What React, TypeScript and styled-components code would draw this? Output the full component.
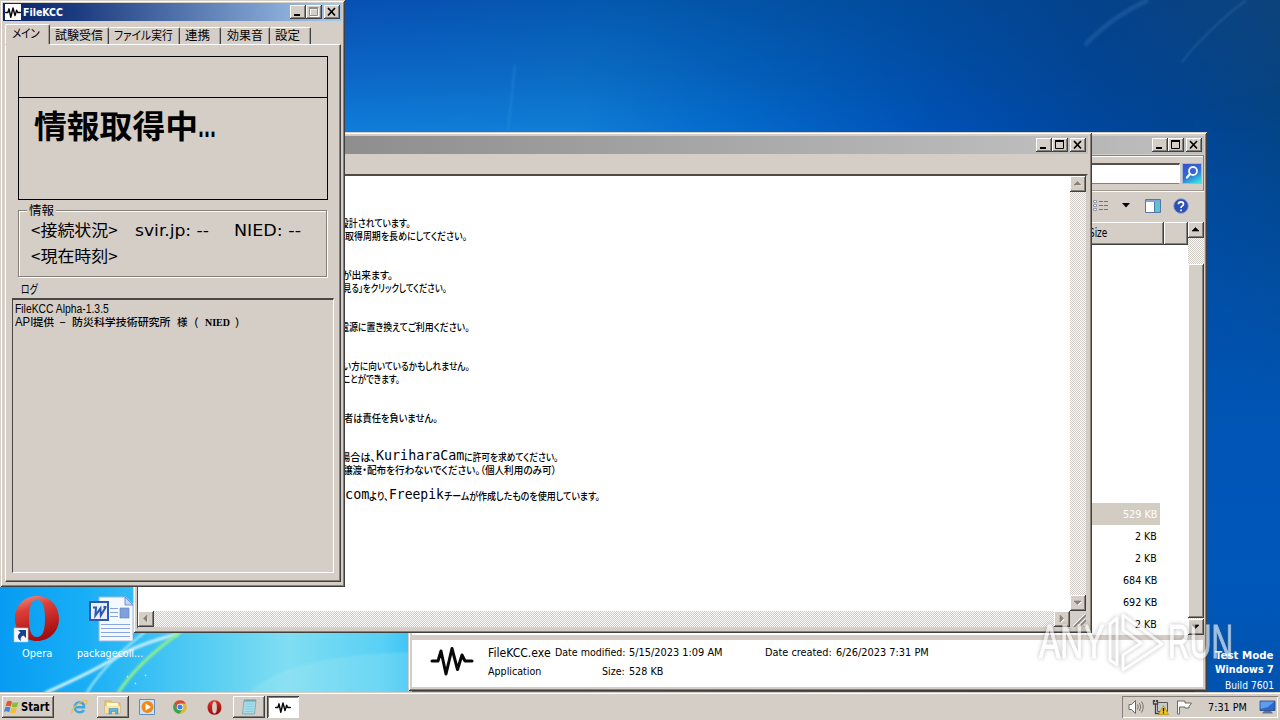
import React, { useLayoutEffect, useRef, useState } from "react";
import styled, { createGlobalStyle, css } from "styled-components";

const FACE = "#d5cec7";
const UI = `"DejaVu Sans Condensed", "DejaVu Sans", "Noto Sans CJK JP", sans-serif`;
const JP = `"Noto Sans CJK JP", sans-serif`;
const MONO = `"DejaVu Sans Mono", monospace`;
const ARIAL = `"Liberation Sans", sans-serif`;
const NARROW = `"Liberation Sans Narrow", "Liberation Sans", sans-serif`;

const Global = createGlobalStyle`
  *, *::before, *::after { box-sizing: border-box; }
  body { margin: 0; overflow: hidden; background: #0552a5; }
  svg { display: block; flex: none; }
`;

const raised = css`
  box-shadow: inset -1px -1px #404040, inset 1px 1px #fff, inset -2px -2px #858079;
`;
const dither = css`
  background: conic-gradient(#fbfaf8 25%, #d2ccc6 0 50%, #fbfaf8 0 75%, #d2ccc6 0) 0 0 / 2px 2px;
`;

/* ---------- text set to a given advance width ---------- */

interface TextStyle {
  $size?: number;
  $face?: string;
  $bold?: boolean;
  $weight?: number;
  $color?: string;
}
const FitBox = styled.span<{ $w: number }>`
  display: block;
  flex: none;
  width: ${(p) => p.$w}px;
  white-space: pre;
`;
const FitInner = styled.span<TextStyle>`
  display: inline-block;
  transform-origin: 0 50%;
  font-family: ${(p) => p.$face ?? UI};
  font-size: ${(p) => p.$size ?? 11}px;
  font-weight: ${(p) => (p.$bold ? 700 : p.$weight ?? 400)};
  color: ${(p) => p.$color ?? "#000"};
  font-feature-settings: "palt";
  line-height: 1;
  vertical-align: middle;
`;
function Fit({ w, dy, children, ...style }: { w: number; dy?: number; children: string } & TextStyle) {
  const ref = useRef<HTMLSpanElement>(null);
  const [scale, setScale] = useState(1);
  useLayoutEffect(() => {
    if (ref.current && ref.current.offsetWidth) setScale(w / ref.current.offsetWidth);
  }, [w, children]);
  const lift = dy ?? (style.$face === JP ? -2 : -1);
  return (
    <FitBox $w={w}>
      <FitInner ref={ref} style={{ transform: `translateY(${lift}px) scaleX(${scale})` }} {...style}>
        {children}
      </FitInner>
    </FitBox>
  );
}

/* ---------- desktop ---------- */

const Desktop = styled.main`
  position: relative;
  width: 1280px;
  height: 720px;
  overflow: hidden;
  cursor: default;
`;
const Layer = styled.div<{ $x: number; $y: number }>`
  position: absolute;
  left: ${(p) => p.$x}px;
  top: ${(p) => p.$y}px;
`;
const Shortcut = styled.div<{ $x: number; $w: number }>`
  position: absolute;
  left: ${(p) => p.$x}px;
  top: 595px;
  width: ${(p) => p.$w}px;
  display: flex;
  flex-direction: column;
  align-items: center;
  gap: 1px;
`;
const BuildTag = styled.div`
  position: absolute;
  right: 6px;
  top: 648px;
  display: flex;
  flex-direction: column;
  align-items: flex-end;
  line-height: 14px;
`;
const BuildLine = styled.div`
  height: 16px;
  padding-top: 2px;
`;
const TagLine = styled.div`
  height: 14px;
`;

function Wallpaper() {
  return (
    <svg width="1280" height="720">
      <defs>
        <linearGradient id="top" x1="0" x2="1" y1="0" y2="0">
          <stop offset=".27" stopColor="#0850b4" />
          <stop offset=".48" stopColor="#0559ae" />
          <stop offset=".7" stopColor="#024c9d" />
          <stop offset=".86" stopColor="#05428a" />
          <stop offset="1" stopColor="#0e447c" />
        </linearGradient>
        <linearGradient id="mid" x1="0" x2="1" y1="0" y2="0">
          <stop offset=".27" stopColor="#107fdb" />
          <stop offset=".45" stopColor="#1180d8" />
          <stop offset=".57" stopColor="#046cce" />
          <stop offset=".74" stopColor="#0050b6" />
          <stop offset=".86" stopColor="#00479c" />
          <stop offset=".93" stopColor="#004594" />
          <stop offset="1" stopColor="#034384" />
        </linearGradient>
        <linearGradient id="fade" x1="0" x2="0" y1="0" y2="1">
          <stop offset="0" stopColor="#000" />
          <stop offset=".1" stopColor="#777" />
          <stop offset=".19" stopColor="#fff" />
        </linearGradient>
        <mask id="fadeMask">
          <rect width="1280" height="720" fill="url(#fade)" />
        </mask>
        <linearGradient id="right" x1="0" x2="0" y1="0" y2="1">
          <stop offset=".15" stopColor="#0058bc" stopOpacity="0" />
          <stop offset=".6" stopColor="#0055b6" />
          <stop offset=".8" stopColor="#0058bb" />
          <stop offset="1" stopColor="#0052ac" />
        </linearGradient>
        <linearGradient id="low" x1="0" x2="1" y1="0" y2="0">
          <stop offset="0" stopColor="#079cf2" />
          <stop offset=".2" stopColor="#18aef6" />
          <stop offset=".45" stopColor="#4cc9f3" />
          <stop offset=".7" stopColor="#80def2" />
          <stop offset=".93" stopColor="#58d0f5" />
          <stop offset="1" stopColor="#3cc3f6" />
        </linearGradient>
        <linearGradient id="ray" x1="0" x2="1" y1="1" y2="0">
          <stop offset="0" stopColor="#d8f8ff" />
          <stop offset="1" stopColor="#fff" stopOpacity=".7" />
        </linearGradient>
        <filter id="soft" x="-20%" y="-20%" width="140%" height="140%">
          <feGaussianBlur stdDeviation="1.1" />
        </filter>
      </defs>
      <rect width="1280" height="720" fill="url(#top)" />
      <rect width="1280" height="720" fill="url(#mid)" mask="url(#fadeMask)" />
      <rect x="1195" width="85" height="720" fill="url(#right)" />
      <path d="M1182 62Q1205 32 1246 0" stroke="#5c92c8" strokeOpacity=".35" strokeWidth="1.500" fill="none" filter="url(#soft)" />
      <path d="M1085 45Q1110 18 1148 0" stroke="#3f7cbc" strokeOpacity=".3" strokeWidth="5" fill="none" filter="url(#soft)" />
      <path d="M515 65Q512 95 508 130" stroke="#3b9be8" strokeOpacity=".3" strokeWidth="2" fill="none" filter="url(#soft)" />
      <rect y="560" width="412" height="160" fill="url(#low)" />
      <path d="M246 695Q285 655 412 652V700Z" fill="#b8f0f4" opacity=".2" filter="url(#soft)" />
      <path d="M45 693Q92 672 115 658T178 634" stroke="url(#ray)" strokeWidth="3" fill="none" filter="url(#soft)" />
      <path d="M86 694Q104 664 145 632" stroke="#a5ecff" strokeWidth="2" fill="none" filter="url(#soft)" />
      <path d="M118 693Q138 662 182 631" stroke="#8ff08a" strokeWidth="3" fill="none" filter="url(#soft)" />
      <path d="M135 683l1 1M127 676l1 1M145 675l1 1" stroke="#b9f4ff" strokeWidth="1.500" />
    </svg>
  );
}

const OperaMark = ({ w, h }: { w: number; h: number }) => (
  <svg width={w} height={h} viewBox="0 0 44 46">
    <defs>
      <linearGradient id="op" x1="0" x2=".3" y1="0" y2="1">
        <stop offset="0" stopColor="#e0473d" />
        <stop offset=".35" stopColor="#cc241f" />
        <stop offset="1" stopColor="#9c0d10" />
      </linearGradient>
    </defs>
    <path
      fillRule="evenodd"
      fill="url(#op)"
      stroke="#b5332e"
      strokeWidth=".6"
      d="M22 1C34 1 43 10 43 23S34 45 22 45 1 36 1 23 10 1 22 1ZM22 4.500C16.500 4.500 14.500 12 14.500 23S16.500 41.500 22 41.500 29.500 34 29.500 23 27.500 4.500 22 4.500Z"
    />
  </svg>
);
const OperaIcon = () => (
  <svg width="50" height="48" viewBox="0 0 50 48">
    <defs>
      <linearGradient id="opb" x1="0" x2=".3" y1="0" y2="1">
        <stop offset="0" stopColor="#f0968c" />
        <stop offset=".35" stopColor="#dc3f36" />
        <stop offset="1" stopColor="#a50d10" />
      </linearGradient>
    </defs>
    <path
      fillRule="evenodd"
      fill="url(#opb)"
      d="M25 1C37 1 47 10 47 23.500S37 46 25 46 3 37 3 23.500 13 1 25 1ZM25 5C19 5 17 12 17 23.500S19 42 25 42 33 35 33 23.500 31 5 25 5Z"
    />
    <path d="M2 33h14v14H2z" fill="#f4f7fb" stroke="#b9c3d0" strokeWidth=".6" />
    <path d="M6 35h8v8l-2.500-2.500C9 41.500 8 43 9 46 5 43.500 5 40 8.500 37.500Z" fill="#19418e" />
  </svg>
);
const WordIcon = () => (
  <svg width="46" height="48" viewBox="-2 -1 46 48">
    <path d="M10 1h27l7 7v37H10z" fill="#f4f8ff" stroke="#a4b6dd" />
    <path d="M36 1v8h8z" fill="#c2d6f5" stroke="#5a7fc4" strokeWidth=".8" />
    <path d="M21 12.500h8M21 16.500h8M21 20.500h8M12 28.500h29M12 32.500h29M12 36.500h29M12 40.500h29" stroke="#8aa4dd" />
    <path d="M31 12h9v10h-9z" fill="#7f9fdd" stroke="#5b7cc5" strokeWidth=".6" />
    <path d="M1 6h18v18H1z" fill="#e8effc" stroke="#2b57b0" strokeWidth="2" />
    <path d="M4 11.500h4M7 11.500l-.6 8 5-7 .4 7 5-8.500M14.500 11h3" fill="none" stroke="#2b57b0" strokeWidth="2" />
  </svg>
);

/* ---------- window chrome ---------- */

const Win = styled.section<{ $x: number; $y: number; $w: number; $h: number }>`
  position: absolute;
  left: ${(p) => p.$x}px;
  top: ${(p) => p.$y}px;
  width: ${(p) => p.$w}px;
  height: ${(p) => p.$h}px;
  padding: 4px;
  display: flex;
  flex-direction: column;
  background: ${FACE};
  box-shadow: inset 1px 1px ${FACE}, inset -1px -1px #404040, inset 2px 2px #fff, inset -2px -2px #858079;
`;
const AppWin = styled(Win)`
  padding: 3px;
`;
const ExplorerWin = styled(Win)`
  padding-right: 3px;
`;
const TitleBar = styled.header<{ $bg: string }>`
  height: 18px;
  flex: none;
  padding: 0 2px;
  display: flex;
  align-items: center;
  background: ${(p) => p.$bg};
`;
const TitleGap = styled.div`
  flex: 1;
`;
const CaptionBtn = styled.span<{ $gap?: boolean }>`
  width: 16px;
  height: 14px;
  margin-left: ${(p) => (p.$gap ? 2 : 0)}px;
  background: ${FACE};
  ${raised}
`;
function CaptionButtons({ maxDisabled }: { maxDisabled?: boolean }) {
  return (
    <>
      <CaptionBtn>
        <svg width="16" height="14"><path d="M4 9h6v2H4z" /></svg>
      </CaptionBtn>
      <CaptionBtn>
        <svg width="16" height="14" fill="none">
          {maxDisabled && <path d="M4.500 4v7.500h8V4M4 4h9" stroke="#fff" />}
          <path d="M3.500 3v7.500h8V3M3 3h9" stroke={maxDisabled ? "#928c84" : "#000"} strokeWidth={1} />
          <path d="M3 3h9" stroke={maxDisabled ? "#928c84" : "#000"} strokeWidth="2" />
        </svg>
      </CaptionBtn>
      <CaptionBtn $gap>
        <svg width="16" height="14"><path d="M4 3l7 7.500M11 3L4 10.500" stroke="#000" strokeWidth="1.700" /></svg>
      </CaptionBtn>
    </>
  );
}
const Wave = ({ w, h, sw = 2.4 }: { w: number; h: number; sw?: number }) => (
  <svg width={w} height={h} viewBox="0 0 44 30" fill="none">
    <path d="M2 15h6l3-10 5 23 6-25.500 5.500 21L32 9l3 6h7" stroke="#080808" strokeWidth={sw} strokeLinejoin="round" strokeLinecap="round" />
  </svg>
);

/* ---------- scroll bars ---------- */

const Track = styled.div<{ $row?: boolean }>`
  display: flex;
  flex-direction: ${(p) => (p.$row ? "row" : "column")};
  justify-content: space-between;
  flex: none;
  ${(p) => (p.$row ? "height: 16px; flex: 1;" : "width: 16px;")}
  ${dither}
`;
const ArrowBtn = styled.span`
  width: 16px;
  height: 16px;
  flex: none;
  background: ${FACE};
  ${raised}
`;
const arrows = {
  up: "M4 9h7L7.500 5.500z",
  down: "M4 6h7L7.500 9.500z",
  left: "M9 4v7L5.500 7.500z",
  right: "M6 4v7L9.500 7.500z",
};
const Arrow = ({ dir, off }: { dir: keyof typeof arrows; off?: boolean }) => (
  <ArrowBtn>
    <svg width="16" height="16">
      {off && <path d={arrows[dir]} fill="#fff" transform="translate(1 1)" />}
      <path d={arrows[dir]} fill={off ? "#858079" : "#000"} stroke={off ? "#858079" : "#000"} strokeWidth=".6" />
    </svg>
  </ArrowBtn>
);

/* ---------- Explorer ---------- */

const AddressBar = styled.div`
  height: 36px;
  flex: none;
  margin-top: 1px;
  padding: 0 1px 0 2px;
  display: flex;
  align-items: center;
  justify-content: flex-end;
  gap: 2px;
  border: 1px solid #858079;
  border-bottom-color: #a09a92;
  box-shadow: inset 1px 1px #fff, 0 1px #fff;
`;
const SearchField = styled.div`
  width: 300px;
  height: 21px;
  background: #fff;
  border: 1px solid #858079;
  border-top: 2px solid #55504a;
  border-right-color: #fff;
`;
const Tools = styled.div`
  height: 31px;
  flex: none;
  padding: 0 15px 2px 0;
  display: flex;
  align-items: center;
  justify-content: flex-end;
`;
const ToolSlot = styled.span<{ $mr: number }>`
  margin-right: ${(p) => p.$mr}px;
`;
const Listing = styled.div`
  height: 413px;
  flex: none;
  display: flex;
  background: #fff;
`;
const Files = styled.div`
  flex: 1;
  display: flex;
  flex-direction: column;
`;
const HeaderRow = styled.div`
  height: 23px;
  display: flex;
  justify-content: flex-end;
`;
const HeaderCell = styled.div<{ $w: number }>`
  width: ${(p) => p.$w}px;
  padding-left: 8px;
  display: flex;
  align-items: center;
  background: ${FACE};
  ${raised}
`;
const FileRows = styled.div`
  margin-top: 258px;
  padding-right: 28px;
  display: flex;
  flex-direction: column;
  align-items: flex-end;
`;
const FileRow = styled.div<{ $on?: boolean }>`
  width: 400px;
  height: 22px;
  padding-right: 3px;
  display: flex;
  align-items: center;
  justify-content: flex-end;
  background: ${(p) => (p.$on ? "#d2ccc3" : "transparent")};
`;
const Thumb = styled.div`
  flex: 1;
  margin: 26px 0 1px;
  background: ${FACE};
  ${raised}
`;
const Details = styled.div`
  flex: 1;
  margin-top: 5px;
  margin-right: 1px;
  display: flex;
  align-items: flex-start;
  padding: 6px 0 0 18px;
  background: #fff;
`;
const DetailGrid = styled.div`
  display: grid;
  grid-template-columns: 67px 74px 136px 71px 100px;
  grid-template-rows: 13px 13px;
  row-gap: 6px;
  margin: 0 0 0 14px;
  align-items: center;
`;
const RightCell = styled.div`
  display: flex;
  justify-content: flex-end;
  padding-right: 4px;
`;

const files: [string, number][] = [
  ["529 KB", 34],
  ["2 KB", 22],
  ["2 KB", 22],
  ["684 KB", 34],
  ["692 KB", 34],
  ["2 KB", 22],
];

function Explorer() {
  return (
    <ExplorerWin $x={408} $y={132} $w={799} $h={559}>
      <TitleBar $bg="linear-gradient(90deg,#808080,#c0c0c0)">
        <TitleGap />
        <CaptionButtons />
      </TitleBar>
      <AddressBar>
        <SearchField />
        <svg width="20" height="21" viewBox="0 0 20 21">
          <defs>
            <linearGradient id="srch" x1=".2" x2=".7" y1="0" y2="1">
              <stop offset="0" stopColor="#3a52cc" />
              <stop offset=".55" stopColor="#2f6fd4" />
              <stop offset="1" stopColor="#35dfe0" />
            </linearGradient>
          </defs>
          <rect x=".5" y=".5" width="19" height="20" fill="url(#srch)" stroke="#9fb6dd" />
          <circle cx="11" cy="8" r="4" fill="#3d62cc" stroke="#eef6ff" strokeWidth="1.800" />
          <path d="M8 11L5 14.500" stroke="#eef6ff" strokeWidth="2.400" strokeLinecap="round" />
        </svg>
      </AddressBar>
      <Tools>
        <ToolSlot $mr={13}>
          <svg width="16" height="14" fill="none">
            <path d="M.5 1.500h3v2h-3zM.5 5.500h3v2h-3zM.5 9.500h3v2h-3z" stroke="#8f97ab" fill="#fff" />
            <path d="M6 2.500h4M11 2.500h4M6 6.500h4M11 6.500h4M6 10.500h4M11 10.500h4" stroke="#6d7488" />
          </svg>
        </ToolSlot>
        <ToolSlot $mr={15}>
          <svg width="8" height="5"><path d="M0 0h8L4 4.500z" /></svg>
        </ToolSlot>
        <ToolSlot $mr={12}>
          <svg width="16" height="14">
            <path d="M.5.5h15v13H.5z" fill="#fff" stroke="#5577a8" />
            <path d="M10 1h5v12h-5z" fill="#5ec3cf" />
            <path d="M1 2h14" stroke="#7fa5d2" strokeWidth="2" />
            <path d="M9.500 3v10" stroke="#5577a8" />
          </svg>
        </ToolSlot>
        <svg width="16" height="16">
          <circle cx="8" cy="8" r="7.400" fill="#2c50b5" stroke="#a0adc8" />
          <path d="M5.500 6.200C5.500 3 10.500 3 10.500 6.200 10.500 8 8 7.800 8 10M8 11.500v1.700" stroke="#fff" strokeWidth="1.700" fill="none" />
        </svg>
      </Tools>
      <Listing>
        <Files>
          <HeaderRow>
            <HeaderCell $w={83}><Fit w={18} $size={11.5}>Size</Fit></HeaderCell>
            <HeaderCell $w={24} />
          </HeaderRow>
          <FileRows>
            {files.map(([label, w], i) => (
              <FileRow key={i} $on={i === 0}>
                <Fit w={w} $size={11} $color={i === 0 ? "#fff" : "#000"}>{label}</Fit>
              </FileRow>
            ))}
          </FileRows>
        </Files>
        <Track>
          <Arrow dir="up" />
          <Thumb />
          <Arrow dir="down" />
        </Track>
      </Listing>
      <Details>
        <Wave w={44} h={30} sw={3} />
        <DetailGrid>
          <Fit w={63} $size={12.5}>FileKCC.exe</Fit>
          <RightCell><Fit w={70} $size={11}>Date modified:</Fit></RightCell>
          <Fit w={94} $size={11}>5/15/2023 1:09 AM</Fit>
          <RightCell><Fit w={67} $size={11}>Date created:</Fit></RightCell>
          <Fit w={93} $size={11}>6/26/2023 7:31 PM</Fit>
          <Fit w={53} $size={11}>Application</Fit>
          <RightCell><Fit w={23} $size={11}>Size:</Fit></RightCell>
          <Fit w={34} $size={11}>528 KB</Fit>
        </DetailGrid>
      </Details>
    </ExplorerWin>
  );
}

/* ---------- Notepad ---------- */

const MenuBar = styled.div`
  height: 20px;
  flex: none;
`;
const Editor = styled.div`
  flex: 1;
  display: flex;
  flex-direction: column;
  border-top: 2px solid #504a45;
  border-left: 1px solid #504a45;
  border-right: 2px solid ${FACE};
  border-bottom: 2px solid ${FACE};
`;
const EditorMain = styled.div`
  flex: 1;
  display: flex;
  background: #fff;
`;
const EditorFoot = styled.div`
  display: flex;
`;
const Grip = styled.div`
  width: 16px;
  height: 16px;
  background: ${FACE};
`;
const Page = styled.div`
  flex: 1;
  display: flex;
  flex-direction: column;
  padding: 2px 0 0 202px;
`;
const Line = styled.div<{ $indent?: number }>`
  height: 13px;
  display: flex;
  align-items: center;
  padding-left: ${(p) => p.$indent ?? 0}px;
`;

type Run = [string, number, boolean?];
const lines: { indent?: number; runs: Run[] }[] = [
  { runs: [] },
  { runs: [] },
  { runs: [] },
  { indent: 0, runs: [["設計されています。", 71]] },
  { indent: 5, runs: [["取得周期を長めにしてください。", 122]] },
  { runs: [] },
  { runs: [] },
  { indent: 2, runs: [["が出来ます。", 51]] },
  { indent: 3, runs: [["見る」をクリックしてください。", 104]] },
  { runs: [] },
  { runs: [] },
  { indent: 0, runs: [["電源に置き換えてご利用ください。", 130]] },
  { runs: [] },
  { runs: [] },
  { indent: 3, runs: [["い方に向いているかもしれません。", 127]] },
  { indent: 3, runs: [["ことができます。", 57]] },
  { runs: [] },
  { runs: [] },
  { indent: 4, runs: [["者は責任を負いません。", 94]] },
  { runs: [] },
  { runs: [] },
  { indent: 0, runs: [["場合は、", 36], ["KuriharaCam", 88, true], ["に許可を求めてください。", 94]] },
  { indent: 3, runs: [["譲渡・配布を行わないでください。（個人利用のみ可）", 213]] },
  { runs: [] },
  { indent: 5, runs: [["com", 24, true], ["より、", 20], ["Freepik", 55, true], ["チームが作成したものを使用しています。", 156]] },
];

function Notepad() {
  return (
    <Win $x={133} $y={132} $w={959} $h={501}>
      <TitleBar $bg="linear-gradient(90deg,#808080,#c0c0c0)">
        <TitleGap />
        <CaptionButtons />
      </TitleBar>
      <MenuBar />
      <Editor>
        <EditorMain>
          <Page>
            {lines.map((line, i) => (
              <Line key={i} $indent={line.indent}>
                {line.runs.map(([text, w, latin]) =>
                  latin ? (
                    <Fit key={text} w={w} dy={-3} $size={13.5} $face={MONO}>{text}</Fit>
                  ) : (
                    <Fit key={text} w={w} $size={10.5} $face={JP} $weight={500}>{text}</Fit>
                  )
                )}
              </Line>
            ))}
          </Page>
          <Track>
            <Arrow dir="up" off />
            <Arrow dir="down" off />
          </Track>
        </EditorMain>
        <EditorFoot>
          <Track $row>
            <Arrow dir="left" off />
            <Arrow dir="right" off />
          </Track>
          <Grip>
            <svg width="16" height="16">
              <path d="M4 16L16 4M9 16l7-7M14 16l2-2" stroke="#858079" strokeWidth="1.600" />
              <path d="M3 15L15 3M8 15l7-7" stroke="#fff" />
            </svg>
          </Grip>
        </EditorFoot>
      </Editor>
    </Win>
  );
}

/* ---------- FileKCC ---------- */

const AppIcon = styled.span`
  width: 16px;
  height: 16px;
  margin-right: 2px;
  display: flex;
  align-items: center;
  background: #fff;
`;
const TabStrip = styled.nav`
  height: 23px;
  flex: none;
  margin: 0 2px;
  display: flex;
  align-items: flex-end;
`;
const Tab = styled.div<{ $w: number; $pad: number; $on?: boolean }>`
  width: ${(p) => p.$w}px;
  height: ${(p) => (p.$on ? 20 : 17)}px;
  padding-left: ${(p) => p.$pad}px;
  padding-bottom: ${(p) => (p.$on ? 1 : 0)}px;
  display: flex;
  align-items: center;
  border-top: 1px solid #fff;
  border-left: ${(p) => (p.$on ? 1 : 0)}px solid #fff;
  border-right: 1px solid #404040;
  border-radius: 2px 2px 0 0;
  box-shadow: inset -1px 0 #a39d96${(p) => (p.$on ? `, 0 1px ${FACE}` : "")};
  position: relative;
  z-index: ${(p) => (p.$on ? 1 : 0)};
`;
const TabPage = styled.div`
  height: 538px;
  margin: 0 1px 0 2px;
  padding: 11px 6px 8px 6px;
  display: flex;
  flex-direction: column;
  border: 1px solid #fff;
  border-right-color: #404040;
  border-bottom-color: #404040;
  box-shadow: inset -1px -1px #858079;
`;
const Alert = styled.div`
  height: 144px;
  margin: 0 6px;
  flex: none;
  display: flex;
  flex-direction: column;
  border: 1px solid #000;
`;
const AlertTop = styled.div`
  height: 41px;
  border-bottom: 1px solid #000;
`;
const AlertBody = styled.div`
  display: flex;
  align-items: center;
  height: 55px;
  padding-left: 15px;
`;
const Group = styled.fieldset`
  position: relative;
  height: 67px;
  margin: 10px 7px 0 6px;
  padding: 11px 0 0 12px;
  flex: none;
  display: flex;
  flex-direction: column;
  gap: 8px;
  border: 1px solid #858079;
  box-shadow: 1px 1px #fff, inset 1px 1px #fff;
`;
const GroupName = styled.span`
  position: absolute;
  left: 8px;
  top: -7px;
  padding: 0 2px;
  line-height: 13px;
  background: ${FACE};
`;
const Status = styled.div`
  height: 18px;
  display: flex;
  align-items: center;
`;
const Gap = styled.span<{ $w: number }>`
  width: ${(p) => p.$w}px;
`;
const LogName = styled.div`
  height: 21px;
  flex: none;
  padding: 3px 0 0 9px;
  display: flex;
  align-items: center;
`;
const LogBox = styled.div`
  flex: 1;
  padding: 3px 0 0 2px;
  border: 1px solid #fff;
  border-top: 2px solid #4a4641;
  border-left: 1px solid #4a4641;
`;
const LogLine = styled.div`
  height: 13px;
  display: flex;
  align-items: center;
`;

const tabs: [string, number, number, number][] = [
  ["メイン", 45, 6, 28],
  ["試験受信", 59, 5, 48],
  ["ファイル実行", 71, 5, 59],
  ["連携", 41, 5, 25],
  ["効果音", 49, 6, 36],
  ["設定", 41, 5, 25],
];

function FileKcc() {
  return (
    <AppWin $x={0} $y={0} $w={345} $h={587}>
      <TitleBar $bg="linear-gradient(90deg,#0a246a,#1c3c80 22%,#a6caf0)">
        <AppIcon><Wave w={16} h={11} sw={4} /></AppIcon>
        <Fit w={40} $size={11} $bold $color="#fff">FileKCC</Fit>
        <TitleGap />
        <CaptionButtons maxDisabled />
      </TitleBar>
      <TabStrip>
        {tabs.map(([label, w, pad, tw], i) => (
          <Tab key={label} $w={w} $pad={pad} $on={i === 0}>
            <Fit w={tw} $size={12} $face={JP}>{label}</Fit>
          </Tab>
        ))}
      </TabStrip>
      <TabPage>
        <Alert>
          <AlertTop />
          <AlertBody>
            <Fit w={164} $size={32} $face={JP} $bold>情報取得中</Fit>
            <Fit w={18} dy={2} $size={28} $bold>...</Fit>
          </AlertBody>
        </Alert>
        <Group>
          <GroupName><Fit w={25} $size={12} $face={JP}>情報</Fit></GroupName>
          <Status>
            <Fit w={87} dy={-3} $size={16} $face={JP}>{"<接続状況>"}</Fit>
            <Gap $w={17} />
            <Fit w={74} $size={16}>svir.jp: --</Fit>
            <Gap $w={25} />
            <Fit w={67} $size={16}>NIED: --</Fit>
          </Status>
          <Status>
            <Fit w={87} dy={-3} $size={16} $face={JP}>{"<現在時刻>"}</Fit>
          </Status>
        </Group>
        <LogName><Fit w={17} dy={-1} $size={12} $face={JP}>ログ</Fit></LogName>
        <LogBox>
          <LogLine><Fit w={94} dy={-2} $size={12} $face={ARIAL}>FileKCC Alpha-1.3.5</Fit></LogLine>
          <LogLine>
            <Fit w={18} dy={-2} $size={12} $face={ARIAL}>API</Fit>
            <Fit w={21} $size={10.5} $face={JP} $weight={500}>提供</Fit>
            <Gap $w={5} />
            <Fit w={8} dy={-2} $size={11}>-</Fit>
            <Gap $w={5} />
            <Fit w={99} $size={10.5} $face={JP} $weight={500}>防災科学技術研究所</Fit>
            <Gap $w={6} />
            <Fit w={11} $size={10.5} $face={JP} $weight={500}>様</Fit>
            <Gap $w={6} />
            <Fit w={5} $size={10.5} $face={JP}>(</Fit>
            <Gap $w={6} />
            <Fit w={25} $size={10} $face={`"Liberation Serif", serif`} $bold>NIED</Fit>
            <Gap $w={5} />
            <Fit w={5} $size={10.5} $face={JP}>)</Fit>
          </LogLine>
        </LogBox>
      </TabPage>
    </AppWin>
  );
}

/* ---------- taskbar ---------- */

const Taskbar = styled.footer`
  position: absolute;
  left: 0;
  right: 0;
  bottom: 0;
  height: 28px;
  padding: 4px 2px 2px;
  display: flex;
  background: ${FACE};
  box-shadow: inset 0 1px ${FACE}, inset 0 2px #fff;
`;
const StartBtn = styled.div`
  width: 52px;
  height: 22px;
  margin-right: 8px;
  padding-left: 2px;
  display: flex;
  align-items: center;
  gap: 1px;
  ${raised}
`;
const Task = styled.div<{ $kind?: "raised" | "active"; $w: number; $ml?: number }>`
  width: ${(p) => p.$w}px;
  margin-left: ${(p) => p.$ml ?? 0}px;
  height: 22px;
  display: flex;
  align-items: center;
  justify-content: center;
  ${(p) => p.$kind === "raised" && raised}
  ${(p) =>
    p.$kind === "active" &&
    css`
      background: #fff;
      box-shadow: inset 1px 1px #404040, inset -1px -1px #fff, inset 2px 2px #858079;
    `}
`;
const Tray = styled.div`
  width: 156px;
  height: 22px;
  margin-left: auto;
  padding: 0 2px 0 6px;
  display: flex;
  align-items: center;
  box-shadow: inset 1px 1px #858079, inset -1px -1px #fff;
`;

function Bar() {
  return (
    <Taskbar>
      <StartBtn>
        <svg width="16" height="16" viewBox="0 0 16 16">
          <path d="M3 2.500Q5.500 1 8 2.800L6.800 7.500Q4 6 1.500 7.300Z" fill="#e8562a" />
          <path d="M8.800 3.200Q11.500 4.500 14.500 3L13 8Q10.500 9 7.700 7.700Z" fill="#86bf34" />
          <path d="M1.300 8.200Q4 7 6.500 8.500L5.200 13.200Q2.500 11.500 0 13Z" fill="#3f8ad8" />
          <path d="M7.400 8.700Q10 10 12.800 8.800L11.500 13.500Q9 15 6.200 13.500Z" fill="#f7bd2a" />
        </svg>
        <Fit w={28} $size={11.5} $bold>Start</Fit>
      </StartBtn>
      <Task $w={35}>
        <svg width="17" height="16" viewBox="0 0 17 16" fill="none">
          <path d="M3.500 8.200H13C13 4.500 10.800 3.200 8.500 3.200S3.800 5 3.800 8.200 6 13.300 8.500 13.300 12.300 12.200 12.800 10.800" stroke="#3fa6e2" strokeWidth="2.500" />
          <path d="M1 14.500C-.5 11 9 1 15 1.500 17 2 15.500 5 14.500 6" stroke="#edbd3c" strokeWidth="1.200" />
        </svg>
      </Task>
      <Task $w={32} $kind="raised">
        <svg width="18" height="16" viewBox="0 0 18 16">
          <path d="M1 2h6l1.500 2H16v10H1z" fill="#efd27a" stroke="#c9a444" strokeWidth=".7" />
          <path d="M3 4h11v4H3z" fill="#fff8d8" />
          <path d="M1 7h15v7H1z" fill="#f8e5a0" />
          <path d="M5 15V9.500h9V15h-2.500v-2.500h-4V15z" fill="#5fb2e4" stroke="#3c87be" strokeWidth=".5" />
        </svg>
      </Task>
      <Task $w={17} $ml={9}>
        <svg width="16" height="16" viewBox="0 0 16 16">
          <path d="M.5.500h15v15H.5z" fill="#cfe3f5" stroke="#5a8fc4" />
          <circle cx="8.500" cy="8" r="6" fill="#f08a14" />
          <path d="M6.500 4.500v7L12 8z" fill="#fff" />
        </svg>
      </Task>
      <Task $w={16} $ml={17}>
        <svg width="14" height="14" viewBox="0 0 14 14">
          <circle cx="7" cy="7" r="6.800" fill="#e3b92c" />
          <path d="M1.100 3.600A6.800 6.800 0 0 1 12.900 3.600H7L4 8.500z" fill="#d84a3b" />
          <path d="M1.100 3.600A6.800 6.800 0 0 0 6.500 13.800L9.500 9 4.200 8.500z" fill="#3aa257" />
          <circle cx="7" cy="7" r="3.200" fill="#fff" />
          <circle cx="7" cy="7" r="2.500" fill="#3f7fe0" />
        </svg>
      </Task>
      <Task $w={16} $ml={18}>
        <OperaMark w={15} h={15} />
      </Task>
      <Task $w={32} $ml={11} $kind="raised">
        <svg width="16" height="16" viewBox="0 0 16 16">
          <path d="M3 1.500h12L13.500 15H1.500z" fill="#a6dbe8" stroke="#6aa7b8" strokeWidth=".8" />
          <path d="M5 5h8M4.700 7.500h8M4.500 10h8M4.300 12.500h8" stroke="#8fcbdb" />
          <path d="M4 0v3M6 0v3M8 0v3M10 0v3M12 0v3M14 0v3" stroke="#6e8a92" strokeWidth=".8" />
        </svg>
      </Task>
      <Task $w={32} $ml={2} $kind="active">
        <Wave w={16} h={11} sw={4} />
      </Task>
      <Tray>
        <svg width="17" height="16" viewBox="0 0 17 16" fill="none">
          <path d="M1 5.500h2.500L7.500 1.500v13L3.500 10.500H1z" fill="#fff" stroke="#6c6863" />
          <path d="M9.500 5.500q1.500 2.500 0 5M11.500 4q2.500 4 0 8M13.500 2.500q3.500 5.500 0 11" stroke="#77726c" />
        </svg>
        <Gap $w={7} />
        <svg width="17" height="16" viewBox="0 0 17 16" fill="none">
          <path d="M5.500 3.500h10v9h-10z" fill="#c3cdd0" stroke="#55595c" />
          <path d="M1.500 1v4h4V1M3.500 5v9.500h5M2.500 1v2M4.500 1v2" stroke="#44413e" strokeWidth="1.300" />
          <path d="M11.500 6.500l5 9h-10z" fill="#f6c81d" stroke="#a67c00" strokeWidth=".6" />
          <path d="M11.500 9v3.500M11.500 13.300v1.200" stroke="#111" strokeWidth="1.300" />
        </svg>
        <Gap $w={7} />
        <svg width="17" height="16" viewBox="0 0 17 16" fill="none">
          <path d="M2 2h7v2h6.500L13 7.500V9H9V8H3.500V15H1.500V1.500" fill="#fff" stroke="#6c6863" />
        </svg>
        <Gap $w={16} />
        <Fit w={39} $size={11}>7:31 PM</Fit>
        <Gap $w={12} />
        <svg width="17" height="16" viewBox="0 0 17 16">
          <path d="M1 2h15v9.500H1z" fill="#2a68cc" stroke="#28457e" strokeWidth=".8" />
          <path d="M1.500 2.500h14L9 8 1.500 10z" fill="#5c9df0" />
          <path d="M5 12h7l2 2.500H3z" fill="#5e7396" />
        </svg>
      </Tray>
    </Taskbar>
  );
}

/* ---------- watermark ---------- */

const Mark = styled.div`
  position: absolute;
  left: 1039px;
  top: 611px;
  height: 62px;
  display: flex;
  align-items: center;
  gap: 3px;
  opacity: 0.62;
  filter: drop-shadow(0 0 2px rgba(70, 70, 70, 0.6));
  -webkit-text-stroke: 1px #fff;
`;

export default function App() {
  return (
    <Desktop>
      <Global />
      <Layer $x={0} $y={0}><Wallpaper /></Layer>
      <Shortcut $x={12} $w={50}>
        <OperaIcon />
        <Fit w={30} $size={11} $color="#fff">Opera</Fit>
      </Shortcut>
      <Shortcut $x={77} $w={66}>
        <WordIcon />
        <Fit w={66} $size={11} $color="#fff">packagecoll...</Fit>
      </Shortcut>
      <Explorer />
      <Notepad />
      <FileKcc />
      <BuildTag>
        <TagLine><Fit w={59} $size={11} $bold $color="#fff">Test Mode</Fit></TagLine>
        <TagLine><Fit w={59} $size={11} $bold $color="#fff">Windows 7</Fit></TagLine>
        <BuildLine><Fit w={49} $size={11} $color="#fff">Build 7601</Fit></BuildLine>
      </BuildTag>
      <Bar />
      <Mark>
        <Fit w={66} $size={49} $face={NARROW} $color="#fff">ANY</Fit>
        <svg width="57" height="62" viewBox="0 0 57 62" fill="none">
          <path d="M2 13V49L9 54V7ZM15 4L54 33 15 59V44L33 32 15 19Z" stroke="#fff" strokeWidth="3" strokeLinejoin="round" />
        </svg>
        <Fit w={65} $size={49} $face={NARROW} $color="#fff">RUN</Fit>
      </Mark>
    </Desktop>
  );
}
